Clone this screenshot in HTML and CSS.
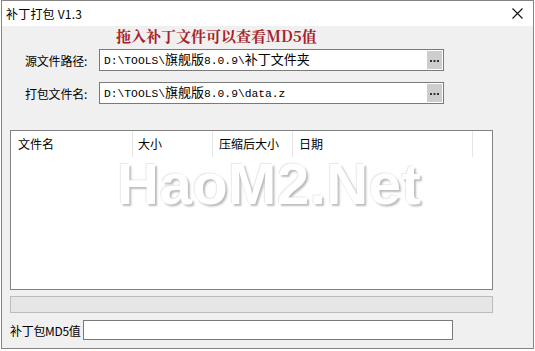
FILE: index.html
```html
<!DOCTYPE html>
<html>
<head>
<meta charset="utf-8">
<link rel="stylesheet" href="styles.css">
</head>
<body>
<div class="window">
  <div class="titlebar">
    <span class="title">补丁打包 V1.3</span>
    <svg class="close" width="11" height="11" viewBox="0 0 11 11"><path d="M0.5 0.5 L10.5 10.5 M10.5 0.5 L0.5 10.5" stroke="#111" stroke-width="1.1" fill="none"/></svg>
  </div>
  <div class="content">
    <div class="heading">拖入补丁文件可以查看MD5值</div>
    <div class="row row1">
      <span class="label">源文件路径:</span>
      <div class="input path">
        <span class="val">D:\TOOLS\<span class="cjk">旗舰版</span>8.0.9\<span class="cjk">补丁文件夹</span></span>
        <span class="btn"><svg width="9" height="3" viewBox="0 0 9 3"><rect x="0" y="0" width="2" height="2" fill="#333"/><rect x="3.5" y="0" width="2" height="2" fill="#333"/><rect x="7" y="0" width="2" height="2" fill="#333"/></svg></span>
      </div>
    </div>
    <div class="row row2">
      <span class="label">打包文件名:</span>
      <div class="input path">
        <span class="val">D:\TOOLS\<span class="cjk">旗舰版</span>8.0.9\data.z</span>
        <span class="btn"><svg width="9" height="3" viewBox="0 0 9 3"><rect x="0" y="0" width="2" height="2" fill="#333"/><rect x="3.5" y="0" width="2" height="2" fill="#333"/><rect x="7" y="0" width="2" height="2" fill="#333"/></svg></span>
      </div>
    </div>
    <div class="list">
      <div class="header">
        <div class="col c1">文件名</div>
        <div class="col c2">大小</div>
        <div class="col c3">压缩后大小</div>
        <div class="col c4">日期</div>
      </div>
      <div class="watermark">HaoM2.Net</div>
    </div>
    <div class="progress"></div>
    <div class="row bottom">
      <span class="label2">补丁包MD5值</span>
      <div class="input md5"></div>
    </div>
  </div>
</div>
</body>
</html>
```

FILE: styles.css
```css
html, body {
  margin: 0;
  padding: 0;
  background: #ffffff;
}
body {
  font-family: "Noto Sans CJK SC", "Liberation Sans", sans-serif;
  font-size: 12px;
  color: #000;
}
.window {
  margin-left: 1px;
  width: 531px;
  height: 347px;
  border: 1px solid #858585;
  display: flex;
  flex-direction: column;
  background: #f0f0f0;
}
.titlebar {
  height: 25px;
  background: #ffffff;
  display: flex;
  align-items: center;
  justify-content: space-between;
  padding: 0 10px 0 4px;
  flex: none;
}
.title {
  font-size: 12px;
  line-height: 14px;
  letter-spacing: 0.2px;
}
.close {
  display: block;
}
.content {
  flex: 1;
  display: flex;
  flex-direction: column;
  padding-left: 8px;
}
.heading {
  margin-top: 1px;
  height: 18px;
  line-height: 18px;
  margin-left: 106px;
  font-size: 15px;
  font-weight: bold;
  color: #a8222a;
  font-family: "Noto Serif CJK SC", "Noto Sans CJK SC", "Liberation Serif", serif;
}
.row {
  display: flex;
  align-items: center;
}
.row1 { margin-top: 4px; }
.row2 { margin-top: 11px; }
.label {
  width: 74px;
  padding-left: 15px;
  font-size: 12px;
  letter-spacing: -0.2px;
}
.input {
  background: #ffffff;
  border: 1px solid #7a7a7a;
  box-sizing: border-box;
  display: flex;
  align-items: center;
}
.path {
  width: 345px;
  height: 22px;
  justify-content: space-between;
  padding: 1px;
}
.val {
  font-family: "Liberation Mono", monospace;
  font-size: 11.3px;
  line-height: 16px;
  padding-left: 3px;
  white-space: nowrap;
  color: #000;
}
.cjk {
  font-family: "Noto Sans CJK SC", sans-serif;
  font-size: 13px;
}
.btn {
  width: 15px;
  height: 18px;
  background: #cdcdcd;
  display: flex;
  align-items: center;
  justify-content: center;
}
.btn svg {
  display: block;
  margin-top: 2px;
}
.list {
  position: relative;
  margin-top: 26px;
  width: 483px;
  height: 160px;
  box-sizing: border-box;
  border: 1px solid #828282;
  background: #ffffff;
  overflow: hidden;
}
.header {
  display: flex;
  height: 26px;
}
.col {
  box-sizing: border-box;
  border-right: 1px solid #e5e5e5;
  font-size: 12px;
  line-height: 26px;
}
.c1 { width: 122px; padding-left: 7px; }
.c2 { width: 80px; padding-left: 5px; }
.c3 { width: 80px; padding-left: 6px; }
.c4 { width: 180px; padding-left: 6px; }
.watermark {
  position: absolute;
  left: 106px;
  top: 20px;
  font-family: "Liberation Sans", sans-serif;
  font-weight: bold;
  font-size: 58px;
  line-height: 66px;
  color: #ffffff;
  letter-spacing: 0.5px;
  text-shadow: 2px 2px 2px #bdbdbd, -1px -1px 1px #e8e8e8;
}
.progress {
  margin-top: 6px;
  width: 483px;
  height: 17px;
  box-sizing: border-box;
  border: 1px solid #bcbcbc;
  background: #e6e6e6;
}
.bottom {
  margin-top: 7px;
}
.label2 {
  width: 73px;
  font-size: 12px;
  letter-spacing: -0.3px;
}
.md5 {
  width: 370px;
  height: 20px;
}
```
